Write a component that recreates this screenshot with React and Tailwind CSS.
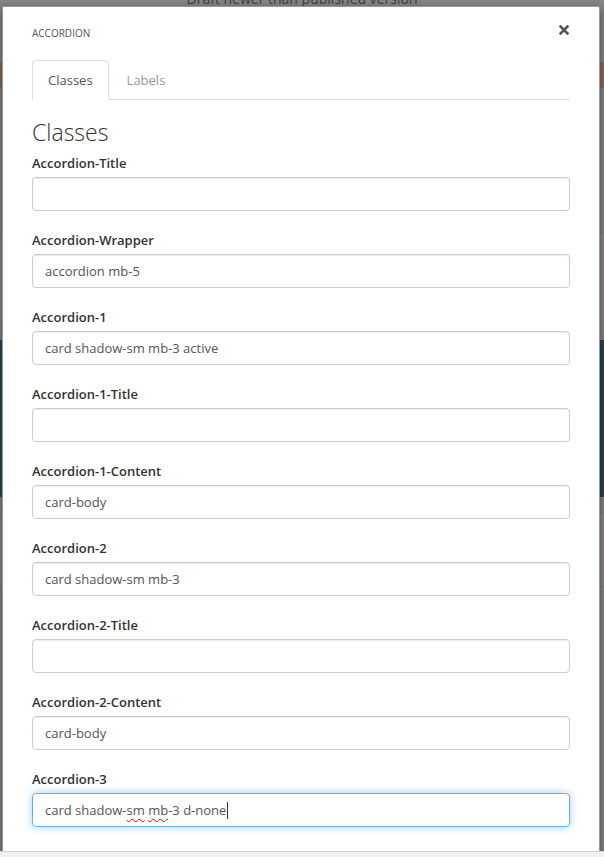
import React from 'react';

const fields = [
  { label: 'Accordion-Title', value: '' },
  { label: 'Accordion-Wrapper', value: 'accordion mb-5' },
  { label: 'Accordion-1', value: 'card shadow-sm mb-3 active' },
  { label: 'Accordion-1-Title', value: '' },
  { label: 'Accordion-1-Content', value: 'card-body' },
  { label: 'Accordion-2', value: 'card shadow-sm mb-3' },
  { label: 'Accordion-2-Title', value: '' },
  { label: 'Accordion-2-Content', value: 'card-body' },
];

const Field = ({ label, value }) => (
  <div className="mb-[18px]">
    <label className="block text-[13px] leading-[20px] pt-px font-semibold text-[#333] mb-[4px]">{label}</label>
    <div className="h-[34px] border border-[#ccc] rounded-[4px] px-3 pt-px flex items-center text-[13px] text-[#555] shadow-[inset_0_1px_1px_rgba(0,0,0,0.075)]">
      {value}
    </div>
  </div>
);

const FocusedField = () => (
  <div className="mb-[18px]">
    <label className="block text-[13px] leading-[20px] pt-px font-semibold text-[#333] mb-[4px]">Accordion-3</label>
    <div className="h-[34px] border border-[#66afe9] rounded-[4px] px-3 pt-px flex items-center text-[13px] text-[#555] shadow-[0_0_8px_rgba(102,175,233,0.6)]">
      <span>card shadow-</span>
      <span className="underline decoration-wavy decoration-[#e00] decoration-1 underline-offset-[3px]">sm</span>
      <span className="whitespace-pre"> </span>
      <span className="underline decoration-wavy decoration-[#e00] decoration-1 underline-offset-[3px]">mb</span>
      <span>-3 d-none</span>
      <span className="inline-block w-px h-[17px] bg-[#333] ml-px"></span>
    </div>
  </div>
);

export default function App() {
  return (
    <div className="relative h-[857px] w-full overflow-hidden bg-[#858585] font-['Open_Sans',sans-serif]">
      {/* dimmed page behind the dialog */}
      <div className="absolute left-0 right-0 top-[-12px] text-center text-[14px] text-[#3d3d3d]">
        Draft newer than published version
      </div>
      <div className="absolute left-0 right-0 top-[62px] h-[26px] bg-[#8e6d5c]"></div>
      <div className="absolute left-0 right-0 top-[235px] h-[85px] bg-[#8e8787]"></div>
      <div className="absolute left-0 right-0 top-[340px] h-[157px] bg-[#2b4452]"></div>
      <div className="absolute left-0 right-0 top-[515px] h-[70px] bg-[#8e8787]"></div>

      {/* dialog */}
      <div className="absolute left-[2px] top-[6px] w-[598px] h-[900px] bg-white border border-[#999] shadow-[0_3px_9px_rgba(0,0,0,0.5)] rounded-[2px] px-[29px]">
        <div className="flex justify-between items-start pt-[19px] h-[53px]">
          <span className="text-[10px] leading-[14px] text-[#555] uppercase">Accordion</span>
          <svg width="10" height="10" viewBox="0 0 10 10" className="mt-[-1px] mr-[1px]">
            <path d="M1.5 1.5 L8.5 8.5 M8.5 1.5 L1.5 8.5" stroke="#555" strokeWidth="2.6" strokeLinecap="square" />
          </svg>
        </div>

        <div className="flex h-[40px] border-b border-[#ddd]">
          <div className="h-[40px] px-[15px] pt-[2px] border border-[#ddd] border-b-white rounded-t-[4px] flex items-center text-[13px] text-[#555] bg-white">
            Classes
          </div>
          <div className="h-[40px] ml-[2px] px-[16px] pt-[2px] flex items-center text-[13px] text-[#999]">
            Labels
          </div>
        </div>

        <h3 className="mt-[20px] mb-[8px] text-[23px] leading-[24px] font-light text-[#333]">Classes</h3>

        {fields.map((f) => (
          <Field key={f.label} label={f.label} value={f.value} />
        ))}
        <FocusedField />
        <Field label="Accordion-3-Title" value="" />
      </div>

      <div className="absolute left-0 right-0 bottom-0 h-[6px] bg-[#f0f0f0] border-t border-[#cfcfcf]"></div>
    </div>
  );
}
